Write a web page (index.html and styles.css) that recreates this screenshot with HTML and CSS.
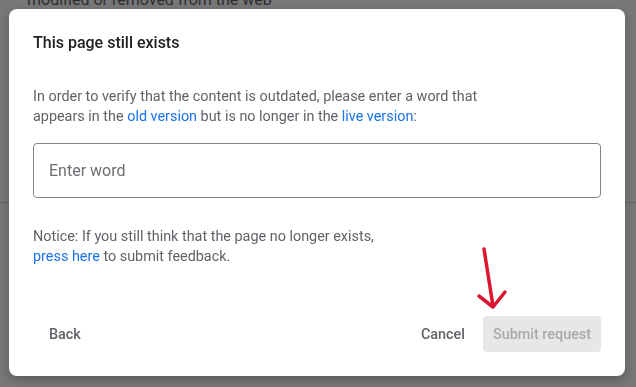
FILE: index.html
```html
<!DOCTYPE html>
<html lang="en">
  <head>
    <meta charset="UTF-8" />
    <title>Remove outdated content</title>
    <link rel="stylesheet" href="styles.css">
  </head>
  <body>
    <div class="page">
      <p class="page-text">modified or removed from the web</p>
      <div class="page-rule"></div>
    </div>
    <div class="scrim"></div>
    <div class="dialog" role="dialog">
      <h2 class="dialog-title">This page still exists</h2>
      <p class="dialog-text">
        In order to verify that the content is outdated, please enter a word that<br>
        appears in the <a href="#">old version</a> but is no longer in the <a href="#">live version</a>:
      </p>
      <input class="word-input" type="text" placeholder="Enter word" />
      <p class="dialog-text notice">
        Notice: If you still think that the page no longer exists,<br>
        <a href="#">press here</a> to submit feedback.
      </p>
      <div class="dialog-actions">
        <button class="text-btn back-btn">Back</button>
        <div class="actions-right">
          <button class="text-btn cancel-btn">Cancel</button>
          <button class="submit-btn" disabled>Submit request</button>
        </div>
      </div>
      <svg class="arrow" width="40" height="70" viewBox="0 0 40 70">
        <path d="M9 4 L18 61" />
        <path d="M4 51 L18 62 L30 47" />
      </svg>
    </div>
  </body>
</html>
```

FILE: styles.css
```css
body {
  margin: 0;
  font-family: Roboto, "Noto Sans", Arial, sans-serif;
  background: #fff;
  height: 387px;
  overflow: hidden;
}
.page {
  padding: 0 27px;
}
.page-text {
  margin: -10px 0 0;
  font-size: 16px;
  line-height: 20px;
  color: #5f6368;
}
.page-rule {
  margin: 192px -27px 0;
  height: 1px;
  background: #d2d3d6;
}
.scrim {
  position: fixed;
  inset: 0;
  background: rgba(0, 0, 0, 0.535);
}
.dialog {
  position: fixed;
  left: 9px;
  top: 9px;
  width: 616px;
  height: 367px;
  box-sizing: border-box;
  padding: 22px 24px 24px;
  background: #fff;
  border-radius: 8px;
  box-shadow: 0 4px 12px rgba(0, 0, 0, 0.25);
  display: flex;
  flex-direction: column;
}
.dialog-title {
  margin: 0;
  font-size: 16px;
  line-height: 24px;
  font-weight: 500;
  color: #202124;
}
.dialog-text {
  margin: 32px 0 0;
  font-size: 14.4px;
  line-height: 20px;
  color: #5f6368;
}
.dialog-text a {
  color: #1a73e8;
  text-decoration: none;
}
.word-input {
  margin-top: 16px;
  height: 55px;
  box-sizing: border-box;
  border: 1px solid #80868b;
  border-radius: 4px;
  padding: 0 15px;
  font-family: inherit;
  font-size: 16px;
  color: #202124;
  outline: none;
}
.word-input::placeholder {
  color: #6b6e72;
}
.notice {
  margin-top: 29px;
}
.dialog-actions {
  margin-top: auto;
  display: flex;
  justify-content: space-between;
  align-items: center;
}
.actions-right {
  display: flex;
  align-items: center;
  gap: 10px;
}
.text-btn,
.submit-btn {
  font-family: inherit;
  font-size: 14.4px;
  font-weight: 500;
  height: 36px;
  border: none;
  border-radius: 4px;
  background: none;
  color: #5f6368;
  cursor: pointer;
}
.back-btn {
  padding: 0 16px;
}
.cancel-btn {
  padding: 0 8px;
}
.submit-btn {
  padding: 0 8px;
  width: 118px;
  background: #e7e7e7;
  color: #a8a9aa;
  cursor: default;
}
.arrow {
  position: absolute;
  left: 466px;
  top: 236px;
  fill: none;
  stroke: #dc1530;
  stroke-width: 3.5;
  stroke-linecap: round;
  stroke-linejoin: round;
}
```
